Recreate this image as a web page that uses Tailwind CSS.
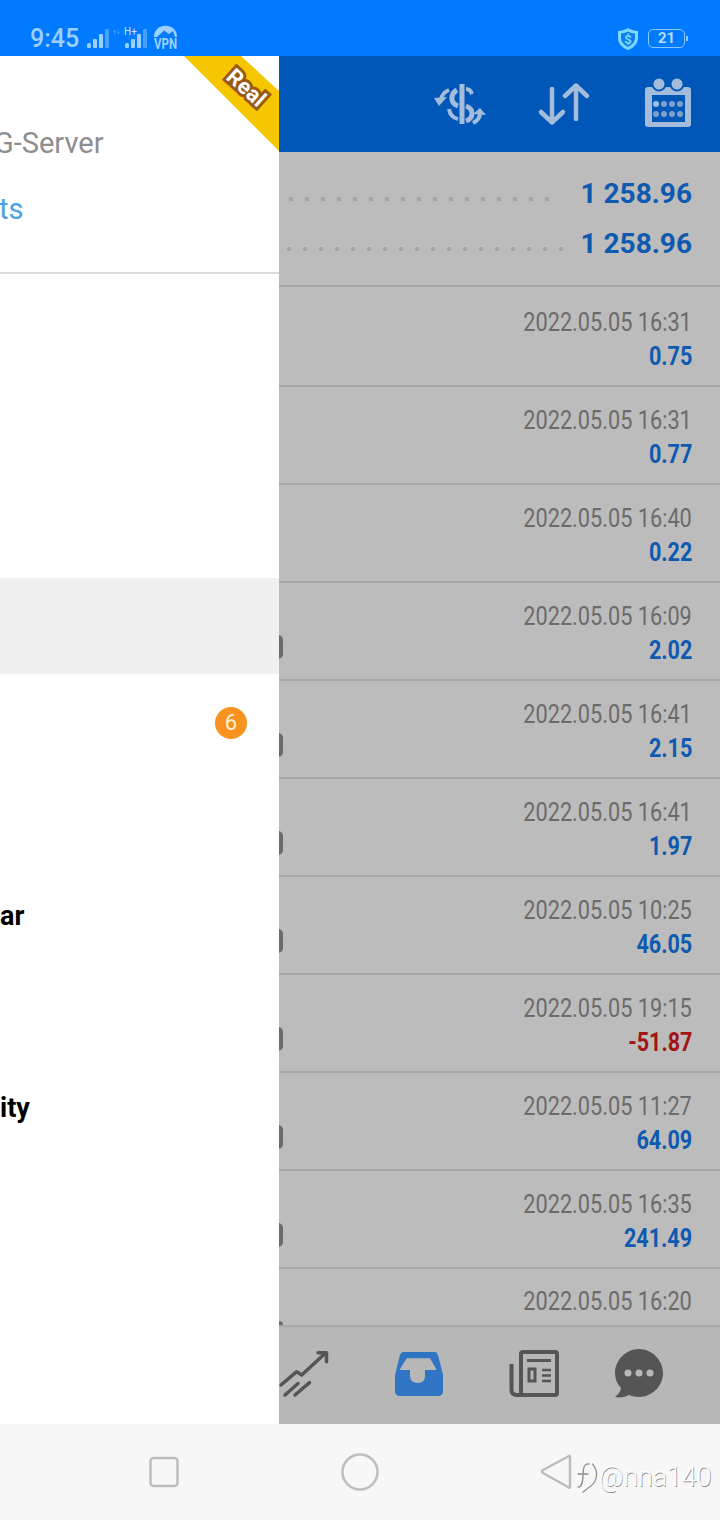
<!DOCTYPE html>
<html lang="en">
<head>
    <meta charset="UTF-8">
    <meta name="viewport" content="width=device-width, initial-scale=1.0">
    <title>Trade history</title>
    <script src="https://cdn.jsdelivr.net/npm/@tailwindcss/browser@4"></script>
</head>
<body class="bg-white font-['Roboto',sans-serif]">
<div class="relative w-[720px] h-[1520px] overflow-hidden flex flex-col">

    <!-- status bar -->
    <div class="h-[56px] bg-[#007aff] flex items-center pt-[21px] pl-[30px] pr-[32px] text-[#9ed0ff]">
        <span class="text-[25px] leading-none font-medium">9:45</span>
        <svg class="ml-[7px] mt-[-2px]" width="92" height="28" viewBox="85 24 92 28">
            <g fill="#9ed0ff">
                <rect x="86" y="43" width="4" height="5" rx="1.500"/>
                <rect x="92" y="39" width="4" height="9" rx="1"/>
                <rect x="98" y="34" width="4" height="14" rx="1"/>
                <rect x="104" y="29" width="4" height="19" rx="1" opacity=".45"/>
                <rect x="124" y="43" width="4" height="5" rx="1.500"/>
                <rect x="130" y="39" width="4" height="9" rx="1"/>
                <rect x="136" y="34" width="4" height="14" rx="1"/>
                <rect x="142" y="29" width="4" height="19" rx="1" opacity=".45"/>
                <path d="M114 35 V30 L112.500 32 M117 29 V34 L118.500 32" fill="none" stroke="#9ed0ff" stroke-width="1" opacity=".4"/>
                <path d="M153 37 C153 22 176 22 176 37 Z"/>
            </g>
            <path d="M156 37 L163 30.500 L168 34 L172 31 L174 37 Z" fill="#0a7bf5"/>
            <text x="123" y="34.500" font-size="10" fill="#cfe6ff" font-family="Roboto">H+</text>
            <text x="153" y="49" font-size="15" font-weight="700" fill="#9ed0ff" font-family="Roboto" textLength="23" lengthAdjust="spacingAndGlyphs">VPN</text>
        </svg>
        <div class="ml-auto flex items-center gap-[9px]">
            <svg width="22" height="24" viewBox="0 0 22 24">
                <path d="M11 1 C14 3 18 4 21 4 L21 11 C21 17 16 21 11 23 C6 21 1 17 1 11 L1 4 C4 4 8 3 11 1 Z" fill="#7fd8ff"/>
                <path d="M4 6.500 C6 6.500 9 5.500 11 4.500 C13 5.500 16 6.500 18 6.500 L18 11 C18 15 15 18 11 20 C7 18 4 15 4 11 Z" fill="#0a80f0"/>
                <text x="11" y="16.500" font-size="13" font-weight="700" text-anchor="middle" fill="#7fd8ff" font-family="Roboto">$</text>
            </svg>
            <div class="flex items-center">
                <div class="w-[37px] h-[19px] rounded-[5px] border border-[#8cc8ff] flex items-center justify-center text-[15px] font-bold leading-none text-[#b5dcff]">21</div>
                <div class="w-[2px] h-[5px] bg-[#8cc8ff] ml-[1px]"></div>
            </div>
        </div>
    </div>

    <!-- toolbar -->
    <div class="h-[96px] bg-[#0057b8] flex items-center justify-end pr-[27px]">
        <svg width="56" height="50" viewBox="432 78 56 50" fill="none" stroke="#a3bcdc" stroke-width="5">
            <path d="M462 83 V123"/>
            <path d="M457 89 C450 93 450 102 458 105"/>
            <path d="M466 88 C469 88 471 90 472 93" stroke-width="4"/>
            <path d="M466 105 C474 108 474 117 466 120"/>
            <path d="M449 108 C450 114 453 117 458 118" stroke-width="4"/>
            <path d="M449 89 C444 91 442 94 441 98" stroke-width="4"/>
            <path d="M473 122 C477 120 480 116 480 112" stroke-width="4"/>
            <path d="M434 97 L447 96 L439 105 Z M486 114 L480 107 L473 113 Z" fill="#a3bcdc" stroke="none"/>
        </svg>
        <svg class="ml-[49px]" width="54" height="44" viewBox="537 82 54 44" fill="none" stroke="#a3bcdc" stroke-width="4.500" stroke-linecap="round" stroke-linejoin="round">
            <path d="M552 89 V122 M541 112 L552 122.500 L563 112"/>
            <path d="M576 119 V85.500 M565 96 L576 85.500 L587 96"/>
        </svg>
        <svg class="ml-[52px]" width="50" height="52" viewBox="643 77 50 52">
            <rect x="645" y="86" width="46" height="40" rx="3" fill="#a3bcdc"/>
            <rect x="652" y="94" width="33" height="27" fill="#0057b8"/>
            <circle cx="659" cy="83" r="6.500" fill="#a3bcdc" stroke="#0057b8" stroke-width="2"/>
            <circle cx="677" cy="83" r="6.500" fill="#a3bcdc" stroke="#0057b8" stroke-width="2"/>
            <g fill="#7fa0cc">
                <circle cx="656" cy="103" r="3" fill="#a3bcdc"/><circle cx="664" cy="103" r="3"/><circle cx="672" cy="103" r="3"/><circle cx="680" cy="103" r="3"/>
                <circle cx="656" cy="113" r="3"/><circle cx="664" cy="113" r="3"/><circle cx="672" cy="113" r="3"/><circle cx="680" cy="113" r="3"/>
            </g>
        </svg>
    </div>

    <!-- dimmed list -->
    <div class="flex-1 min-h-0 bg-[#bcbcbc] flex flex-col overflow-hidden">
        <div class="h-[135px] shrink-0 border-b-2 border-[#a8a8a8] pr-[28px] pt-[16px]">
            <div class="h-[50px] flex items-center justify-end">
                <div class="w-[272px] h-[4px] mr-[26px] mt-[11px] bg-[radial-gradient(circle,#a3a3a3_2px,transparent_2.500px)] bg-[length:16px_4px]"></div>
                <span class="text-[28px] leading-none font-bold text-[#0d5ab0] whitespace-nowrap pt-[2px]">1 258.96</span>
            </div>
            <div class="h-[50px] flex items-center justify-end">
                <div class="w-[288px] h-[4px] mr-[12px] mt-[11px] bg-[radial-gradient(circle,#a3a3a3_2px,transparent_2.500px)] bg-[length:16px_4px]"></div>
                <span class="text-[28px] leading-none font-bold text-[#0d5ab0] whitespace-nowrap pt-[2px]">1 258.96</span>
            </div>
        </div>

        <div class="h-[100px] shrink-0 border-b-2 border-[#a8a8a8] pr-[28px] flex flex-col items-end pt-[19px]">
            <span class="text-[26px] leading-[32px] text-[#6b6b6b] whitespace-nowrap scale-x-[0.835] origin-right">2022.05.05 16:31</span>
            <span class="text-[26px] leading-[32px] mt-[2px] font-bold text-[#0d5ab0] scale-x-[0.83] origin-right">0.75</span>
        </div>
        <div class="h-[98px] shrink-0 border-b-2 border-[#a8a8a8] pr-[28px] flex flex-col items-end pt-[17px]">
            <span class="text-[26px] leading-[32px] text-[#6b6b6b] whitespace-nowrap scale-x-[0.835] origin-right">2022.05.05 16:31</span>
            <span class="text-[26px] leading-[32px] mt-[2px] font-bold text-[#0d5ab0] scale-x-[0.83] origin-right">0.77</span>
        </div>
        <div class="h-[98px] shrink-0 border-b-2 border-[#a8a8a8] pr-[28px] flex flex-col items-end pt-[17px]">
            <span class="text-[26px] leading-[32px] text-[#6b6b6b] whitespace-nowrap scale-x-[0.835] origin-right">2022.05.05 16:40</span>
            <span class="text-[26px] leading-[32px] mt-[2px] font-bold text-[#0d5ab0] scale-x-[0.83] origin-right">0.22</span>
        </div>
        <div class="relative h-[98px] shrink-0 border-b-2 border-[#a8a8a8] pr-[28px] flex flex-col items-end pt-[17px]">
            <span class="absolute left-[273px] top-[52px] w-[10px] h-[24px] rounded-[5px] bg-[#6b6b6b]"></span>
            <span class="text-[26px] leading-[32px] text-[#6b6b6b] whitespace-nowrap scale-x-[0.835] origin-right">2022.05.05 16:09</span>
            <span class="text-[26px] leading-[32px] mt-[2px] font-bold text-[#0d5ab0] scale-x-[0.83] origin-right">2.02</span>
        </div>
        <div class="relative h-[98px] shrink-0 border-b-2 border-[#a8a8a8] pr-[28px] flex flex-col items-end pt-[17px]">
            <span class="absolute left-[273px] top-[52px] w-[10px] h-[24px] rounded-[5px] bg-[#6b6b6b]"></span>
            <span class="text-[26px] leading-[32px] text-[#6b6b6b] whitespace-nowrap scale-x-[0.835] origin-right">2022.05.05 16:41</span>
            <span class="text-[26px] leading-[32px] mt-[2px] font-bold text-[#0d5ab0] scale-x-[0.83] origin-right">2.15</span>
        </div>
        <div class="relative h-[98px] shrink-0 border-b-2 border-[#a8a8a8] pr-[28px] flex flex-col items-end pt-[17px]">
            <span class="absolute left-[273px] top-[52px] w-[10px] h-[24px] rounded-[5px] bg-[#6b6b6b]"></span>
            <span class="text-[26px] leading-[32px] text-[#6b6b6b] whitespace-nowrap scale-x-[0.835] origin-right">2022.05.05 16:41</span>
            <span class="text-[26px] leading-[32px] mt-[2px] font-bold text-[#0d5ab0] scale-x-[0.83] origin-right">1.97</span>
        </div>
        <div class="relative h-[98px] shrink-0 border-b-2 border-[#a8a8a8] pr-[28px] flex flex-col items-end pt-[17px]">
            <span class="absolute left-[273px] top-[52px] w-[10px] h-[24px] rounded-[5px] bg-[#6b6b6b]"></span>
            <span class="text-[26px] leading-[32px] text-[#6b6b6b] whitespace-nowrap scale-x-[0.835] origin-right">2022.05.05 10:25</span>
            <span class="text-[26px] leading-[32px] mt-[2px] font-bold text-[#0d5ab0] scale-x-[0.83] origin-right">46.05</span>
        </div>
        <div class="relative h-[98px] shrink-0 border-b-2 border-[#a8a8a8] pr-[28px] flex flex-col items-end pt-[17px]">
            <span class="absolute left-[273px] top-[52px] w-[10px] h-[24px] rounded-[5px] bg-[#6b6b6b]"></span>
            <span class="text-[26px] leading-[32px] text-[#6b6b6b] whitespace-nowrap scale-x-[0.835] origin-right">2022.05.05 19:15</span>
            <span class="text-[26px] leading-[32px] mt-[2px] font-bold text-[#a31515] scale-x-[0.83] origin-right">-51.87</span>
        </div>
        <div class="relative h-[98px] shrink-0 border-b-2 border-[#a8a8a8] pr-[28px] flex flex-col items-end pt-[17px]">
            <span class="absolute left-[273px] top-[52px] w-[10px] h-[24px] rounded-[5px] bg-[#6b6b6b]"></span>
            <span class="text-[26px] leading-[32px] text-[#6b6b6b] whitespace-nowrap scale-x-[0.835] origin-right">2022.05.05 11:27</span>
            <span class="text-[26px] leading-[32px] mt-[2px] font-bold text-[#0d5ab0] scale-x-[0.83] origin-right">64.09</span>
        </div>
        <div class="relative h-[98px] shrink-0 border-b-2 border-[#a8a8a8] pr-[28px] flex flex-col items-end pt-[17px]">
            <span class="absolute left-[273px] top-[52px] w-[10px] h-[24px] rounded-[5px] bg-[#6b6b6b]"></span>
            <span class="text-[26px] leading-[32px] text-[#6b6b6b] whitespace-nowrap scale-x-[0.835] origin-right">2022.05.05 16:35</span>
            <span class="text-[26px] leading-[32px] mt-[2px] font-bold text-[#0d5ab0] scale-x-[0.83] origin-right">241.49</span>
        </div>
        <div class="relative flex-1 min-h-0 pr-[28px] flex flex-col items-end pt-[16px]">
            <span class="absolute left-[275px] bottom-0 w-[8px] h-[4px] rounded-t-[4px] bg-[#6b6b6b]"></span>
            <span class="text-[26px] leading-[32px] text-[#6b6b6b] whitespace-nowrap scale-x-[0.835] origin-right">2022.05.05 16:20</span>
        </div>
    </div>

    <!-- bottom tabs -->
    <div class="h-[99px] shrink-0 bg-[#b7b7b7] border-t-2 border-[#a8a8a8] relative">
        <svg class="absolute left-0 top-0" width="720" height="97" viewBox="0 1327 720 97">
            <g fill="none" stroke="#555" stroke-width="3.500" stroke-linecap="round" stroke-linejoin="round">
                <path d="M281 1385 L296.700 1371.700 L301.700 1375 L325 1353.500"/>
                <path d="M285 1395 L298 1383.500 M295 1395 L309.500 1382.700"/>
                <path d="M318 1352.700 H326.500 V1361.700"/>
            </g>
            <path fill-rule="evenodd" fill="#2f75c4" d="M403 1352 H435 Q437 1352 438 1355 L443 1375 V1391 Q443 1396 438 1396 H400 Q395 1396 395 1391 V1375 L400 1355 Q401 1352 403 1352 Z M406.700 1358.300 L399.500 1370 H410 V1376 Q410 1383 418 1383 Q425 1383 425 1376 V1370 H436.700 L430 1358.300 Z"/>
            <g fill="none" stroke="#555" stroke-width="4">
                <rect x="521" y="1352" width="36" height="43" rx="2"/>
                <path d="M511.500 1364 V1390 Q511.500 1395 517 1395 H522"/>
                <path d="M527 1360.500 H551" stroke-width="3"/>
                <rect x="529" y="1369" width="6" height="12" stroke-width="3"/>
                <path d="M542 1370 H551 M542 1375.500 H551 M542 1381 H551" stroke-width="2.500"/>
            </g>
            <path fill="#555" d="M639 1349 C652 1349 663 1360 663 1373 C663 1386 652 1397 639 1397 C635 1397 632 1396 629 1395 C625 1397 620 1398 615 1397 C619 1394 621 1390 621 1388 C617 1384 615 1379 615 1373 C615 1360 626 1349 639 1349 Z"/>
            <g fill="#b7b7b7"><circle cx="628" cy="1373" r="3.500"/><circle cx="639" cy="1373" r="3.500"/><circle cx="650" cy="1373" r="3.500"/></g>
        </svg>
    </div>

    <!-- android nav bar -->
    <div class="h-[96px] shrink-0 bg-[#f7f7f7] flex items-center">
        <svg width="720" height="96" viewBox="0 1424 720 96" fill="none" stroke="#bdbdbd" stroke-width="2.500">
            <rect x="150.500" y="1458" width="27" height="28" rx="3"/>
            <circle cx="360" cy="1472" r="17.500"/>
            <path d="M569 1456 Q570 1455 570 1458 V1486 Q570 1489 568 1487 L543 1473 Q541 1472 543 1470 Z" stroke-linejoin="round"/>
        </svg>
    </div>

    <!-- watermark -->
    <div class="absolute left-[577px] top-[1460px] flex items-center text-[27px] leading-[32px] font-light text-white [text-shadow:0.6px_0.6px_0_#8f8f8f] whitespace-nowrap">
        <svg width="22" height="34" viewBox="0 0 22 34" fill="none" stroke="#8f8f8f" stroke-width="1.300" stroke-linecap="round">
            <path d="M12 4 C8 3 6 7 6 14 C6 22 5 27 1 27 M1 14 H11"/>
            <path d="M15 3 C21 9 22 22 10 27 L5 31" stroke="#fff"/>
            <path d="M15.500 4 C21 10 22 22 11 28 L6 32"/>
        </svg>
        <span class="tracking-[-0.2px]">@nna140</span>
    </div>

    <!-- drawer -->
    <div class="absolute left-0 top-[56px] w-[279px] h-[1368px] bg-white overflow-hidden flex flex-col">
        <svg class="absolute right-0 top-0" width="95" height="95" viewBox="184 56 95 95">
            <path d="M184 56 H241 L279 91 V151 Z" fill="#f6c700"/>
        </svg>
        <span class="absolute left-[217px] top-[20px] w-[58px] text-center text-[22px] leading-[24px] font-bold text-white rotate-[42deg] [-webkit-text-stroke:6px_#9a5a14] [paint-order:stroke_fill]">Real</span>

        <div class="h-[218px] shrink-0 border-b-2 border-[#dcdcdc] overflow-hidden">
            <div class="mt-[70px] -ml-[6px] text-[29px] leading-[34px] text-[#8e8e8e] whitespace-nowrap">G-Server</div>
            <div class="mt-[32px] -ml-[1px] text-[29px] leading-[34px] text-[#4a9fe6] whitespace-nowrap">ts</div>
        </div>
        <div class="h-[304px] shrink-0"></div>
        <div class="h-[96px] shrink-0 bg-[#f0f0f0]"></div>
        <div class="h-[96px] shrink-0 flex items-center justify-end pr-[32px] pt-[2px]">
            <span class="w-[32px] h-[32px] rounded-full bg-[#f7931e] flex items-center justify-center text-[22px] leading-none text-[#fdf0d8]">6</span>
        </div>
        <div class="h-[96px] shrink-0"></div>
        <div class="h-[96px] shrink-0 flex items-center pt-[5px] text-[27px] font-bold text-black">ar</div>
        <div class="h-[96px] shrink-0"></div>
        <div class="h-[96px] shrink-0 flex items-center pt-[5px] text-[27px] font-bold text-black">ity</div>
    </div>
</div>
</body>
</html>
